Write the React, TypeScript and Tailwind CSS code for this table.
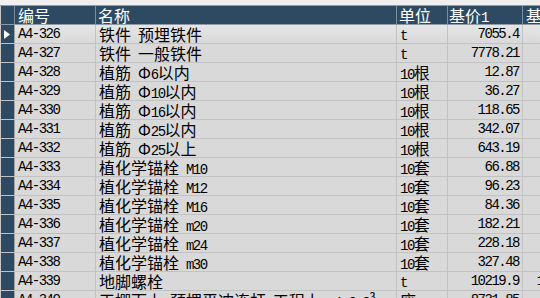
import React from 'react';

type Row = { code: string; name: string; unit: string; p1: string; p2: string };

const rows: Row[] = [
  { code: 'A4-326', name: '铁件 预埋铁件', unit: 't', p1: '7055.4', p2: '7055.4' },
  { code: 'A4-327', name: '铁件 一般铁件', unit: 't', p1: '7778.21', p2: '7778.2' },
  { code: 'A4-328', name: '植筋 Φ6以内', unit: '10根', p1: '12.87', p2: '12.87' },
  { code: 'A4-329', name: '植筋 Φ10以内', unit: '10根', p1: '36.27', p2: '36.27' },
  { code: 'A4-330', name: '植筋 Φ16以内', unit: '10根', p1: '118.65', p2: '118.65' },
  { code: 'A4-331', name: '植筋 Φ25以内', unit: '10根', p1: '342.07', p2: '342.07' },
  { code: 'A4-332', name: '植筋 Φ25以上', unit: '10根', p1: '643.19', p2: '643.19' },
  { code: 'A4-333', name: '植化学锚栓 M10', unit: '10套', p1: '66.88', p2: '66.88' },
  { code: 'A4-334', name: '植化学锚栓 M12', unit: '10套', p1: '96.23', p2: '96.23' },
  { code: 'A4-335', name: '植化学锚栓 M16', unit: '10套', p1: '84.36', p2: '84.36' },
  { code: 'A4-336', name: '植化学锚栓 m20', unit: '10套', p1: '182.21', p2: '182.21' },
  { code: 'A4-337', name: '植化学锚栓 m24', unit: '10套', p1: '228.18', p2: '228.18' },
  { code: 'A4-338', name: '植化学锚栓 m30', unit: '10套', p1: '327.48', p2: '327.48' },
  { code: 'A4-339', name: '地脚螺栓', unit: 't', p1: '10219.9', p2: '10219.9' },
  { code: 'A4-340', name: '天棚面上 预埋平冲连杆 工程上 m1.0.2³', unit: '座', p1: '8731.85', p2: '8731.8' },
];

const mono = "font-['Liberation_Mono',monospace] text-[14px] tracking-[-1.5px]";

// ascii runs get the narrow mono face, everything else the CJK face
const Mixed: React.FC<{ text: string }> = ({ text }) => {
  const parts = text.match(/[\x20-\x7e]+|[^\x20-\x7e]+/g) || [];
  return (
    <div className="leading-[18px] whitespace-pre">
      {parts.map((p, i) =>
        /^[\x20-\x7e]+$/.test(p) ? (
          <span key={i} className={mono}>
            {p}
          </span>
        ) : (
          <span key={i} className="font-['Noto_Sans_CJK_SC',sans-serif] text-[16px]">
            {p}
          </span>
        )
      )}
    </div>
  );
};

export default function App() {
  return (
    <div className="w-[540px] h-[298px] overflow-hidden bg-[#f0f0f0]">
      <div className="h-[6px] bg-[#efefef] border-b border-[#9a9a9a]" />
      <div className="w-[700px]">
        <div className="flex h-[19px] bg-[#2e4a63] text-white border-b border-[#8e9aa6]">
          <div className="w-[15px] border-l border-[#c8c8c8] border-r border-r-[#7d8c9b]" />
          <div className="w-[81px] border-r border-[#7d8c9b] pl-[3px]">
            <Mixed text="编号" />
          </div>
          <div className="w-[301px] border-r border-[#7d8c9b] pl-[2px]">
            <Mixed text="名称" />
          </div>
          <div className="w-[51px] border-r border-[#7d8c9b] pl-[2px]">
            <Mixed text="单位" />
          </div>
          <div className="w-[75px] border-r border-[#7d8c9b] pl-[1px]">
            <Mixed text="基价1" />
          </div>
          <div className="w-[66px] border-r border-[#7d8c9b] pl-[3px]">
            <Mixed text="基价2" />
          </div>
        </div>
        {rows.map((r, i) => (
          <div
            key={r.code}
            className={
              i === 0
                ? 'flex h-[19px] border-b border-[#c2c2c2] text-black bg-gradient-to-b from-[#e6e6e6] to-[#d9d9d9]'
                : 'flex h-[19px] border-b border-[#c2c2c2] text-black bg-[#d9d9d9]'
            }
          >
            <div className="w-[15px] bg-[#2e4a63] border-l border-[#c8c8c8] border-r border-r-[#a3a3a3] flex items-center pl-[3px]">
              {i === 0 && (
                <svg width="6" height="9" viewBox="0 0 6 9">
                  <path d="M0 0 L6 4.5 L0 9 Z" fill="#ffffff" />
                </svg>
              )}
            </div>
            <div className={`w-[81px] border-r border-[#c2c2c2] pl-[3px] leading-[18px] ${mono}`}>{r.code}</div>
            <div className="w-[301px] border-r border-[#c2c2c2] pl-[3px] whitespace-nowrap overflow-hidden">
              <Mixed text={r.name} />
            </div>
            <div className="w-[51px] border-r border-[#c2c2c2] pl-[3px]">
              <Mixed text={r.unit} />
            </div>
            <div className={`w-[75px] border-r border-[#c2c2c2] pr-[3px] text-right leading-[18px] ${mono}`}>{r.p1}</div>
            <div className={`w-[66px] border-r border-[#c2c2c2] pr-[3px] text-right leading-[18px] ${mono}`}>{r.p2}</div>
          </div>
        ))}
      </div>
    </div>
  );
}
